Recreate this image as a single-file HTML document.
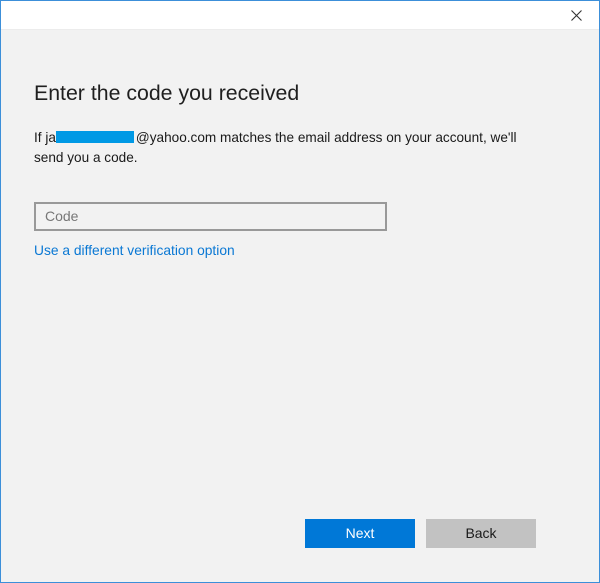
<!DOCTYPE html>
<html><head><style>
html,body{margin:0;padding:0}
body{width:600px;height:583px;position:relative;overflow:hidden;background:#f2f2f2;font-family:"Liberation Sans",sans-serif;}
.frame{position:absolute;left:0;top:0;width:598px;height:581px;border:1px solid #3c8fd9;}
.title{position:absolute;left:1px;top:1px;width:598px;height:28px;background:#fff;border-bottom:1px solid #ececec;}
h1{position:absolute;left:34px;top:81px;margin:0;font-weight:normal;font-size:21.3px;color:#1f1f1f;}
.p{position:absolute;left:34px;top:128px;font-size:13.6px;line-height:20px;color:#1a1a1a;width:520px;}
.red{display:inline-block;width:78px;height:12px;background:#0099e5;vertical-align:-1px;margin-right:2px}
.inp{position:absolute;left:34px;top:202px;width:349px;height:25px;border:2px solid #999;background:#f2f2f2;font-size:14px;color:#777;line-height:25px;box-sizing:content-box}
.inp span{margin-left:9px}
.link{position:absolute;left:34px;top:243px;font-size:13.8px;color:#0a78d4}
.btn{position:absolute;top:519px;width:110px;height:29px;line-height:29px;text-align:center;font-size:14px}
</style></head><body>
<div class="frame"></div>
<div class="title"><svg style="position:absolute;left:570px;top:9px" width="11" height="11"><path d="M0.5 0.5L10.5 10.5M10.5 0.5L0.5 10.5" stroke="#333" stroke-width="1.1"/></svg></div>
<h1>Enter the code you received</h1>
<div class="p">If ja<span class="red"></span>@yahoo.com matches the email address on your account, we'll<br>send you a code.</div>
<div class="inp"><span>Code</span></div>
<div class="link">Use a different verification option</div>
<div class="btn" style="left:305px;background:#0078d7;color:#fff">Next</div>
<div class="btn" style="left:426px;background:#c2c2c2;color:#1a1a1a">Back</div>
</body></html>
